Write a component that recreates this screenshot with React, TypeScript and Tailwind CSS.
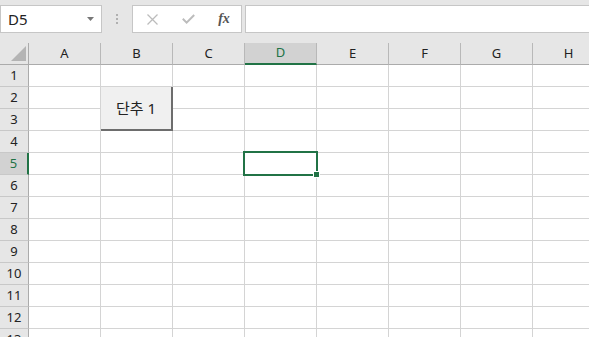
const COLS = ["A", "B", "C", "D", "E", "F", "G", "H"];
const ROWS = Array.from({ length: 13 }, (_, i) => i + 1);

const font = "font-['Noto_Sans','Noto_Sans_CJK_KR',sans-serif]";

function FormulaBar() {
  return (
    <div className="flex h-[43px] items-start bg-[#e6e6e6] pt-[5px]">
      {/* name box */}
      <div className="flex h-[28px] w-[102px] shrink-0 items-center justify-between border border-[#c6c6c6] bg-white pl-[7px] pr-[7px]">
        <span className="text-[15px] leading-none text-[#222]">D5</span>
        <svg width="7" height="4" viewBox="0 0 7 4">
          <polygon points="0,0 7,0 3.5,4" fill="#777" />
        </svg>
      </div>
      <div className="flex h-[28px] w-[30px] shrink-0 flex-col items-center justify-center gap-[2px]">
        <span className="h-[2px] w-[2px] bg-[#b0b0b0]" />
        <span className="h-[2px] w-[2px] bg-[#b0b0b0]" />
        <span className="h-[2px] w-[2px] bg-[#b0b0b0]" />
      </div>
      {/* cancel / enter / fx */}
      <div className="flex h-[28px] w-[110px] shrink-0 items-center border border-[#c6c6c6] bg-white">
        <div className="flex w-[37px] justify-center pl-[2px]">
          <svg width="11" height="11" viewBox="0 0 11 11">
            <path d="M0.5 0.5 L10.5 10.5 M10.5 0.5 L0.5 10.5" stroke="#bcbcbc" strokeWidth="1.3" />
          </svg>
        </div>
        <div className="flex w-[37px] justify-center">
          <svg width="13" height="10" viewBox="0 0 13 10">
            <path d="M0.8 4.8 L4.6 8.6 L12.2 1" stroke="#bcbcbc" strokeWidth="2" fill="none" />
          </svg>
        </div>
        <div className="flex w-[34px] justify-center">
          <span className="font-['Liberation_Serif',serif] text-[14px] font-bold italic leading-none text-[#555]">
            fx
          </span>
        </div>
      </div>
      <div className="ml-[3px] h-[28px] flex-1 border border-r-0 border-[#c6c6c6] bg-white" />
    </div>
  );
}

export default function App() {
  return (
    <div className={`relative h-[337px] w-[589px] overflow-hidden bg-white ${font}`}>
      <FormulaBar />

      {/* column headers */}
      <div className="flex h-[22px] bg-[#e6e6e6]">
        <div className="flex w-[29px] shrink-0 items-end border-r border-b border-[#ababab]">
          <svg width="28" height="21" viewBox="0 0 28 21">
            <polygon points="11,18 26,18 26,3" fill="#b4b4b4" />
          </svg>
        </div>
        {COLS.map((c) => (
          <div
            key={c}
            className={
              c === "D"
                ? "flex w-[72px] shrink-0 items-center justify-center border-r border-b-2 border-r-[#b8b8b8] border-b-[#217346] bg-[#d2d2d2] text-[13px] text-[#217346]"
                : "flex w-[72px] shrink-0 items-center justify-center border-r border-b border-r-[#b8b8b8] border-b-[#ababab] text-[13px] text-[#222]"
            }
          >
            {c}
          </div>
        ))}
      </div>

      {/* rows */}
      {ROWS.map((r) => (
        <div key={r} className="flex h-[22px]">
          <div
            className={
              r === 5
                ? "flex w-[29px] shrink-0 items-center justify-center border-r-2 border-b border-r-[#217346] border-b-[#c8c8c8] bg-[#d2d2d2] text-[13px] text-[#217346]"
                : "flex w-[29px] shrink-0 items-center justify-center border-r border-b border-r-[#ababab] border-b-[#c8c8c8] bg-[#e6e6e6] text-[13px] text-[#222]"
            }
          >
            {r}
          </div>
          {COLS.map((c) => (
            <div key={c} className="relative w-[72px] shrink-0 border-r border-b border-[#d4d4d4]">
              {r === 5 && c === "D" && (
                <>
                  <span className="absolute -top-[2px] -right-[2px] -bottom-[2px] -left-[2px] z-10 border-2 border-[#217346]" />
                  <span className="absolute -right-[4px] -bottom-[4px] z-20 h-[7px] w-[7px] border border-white bg-[#217346]" />
                </>
              )}
            </div>
          ))}
        </div>
      ))}

      {/* form control button floating over B2:B3 */}
      <button className="absolute top-[87px] left-[101px] z-30 flex h-[44px] w-[72px] items-center justify-center border-r-2 border-b-2 border-[#6d6d6d] bg-[#f0f0f0] text-[15px] text-[#222]">
        단추 1
      </button>
    </div>
  );
}
